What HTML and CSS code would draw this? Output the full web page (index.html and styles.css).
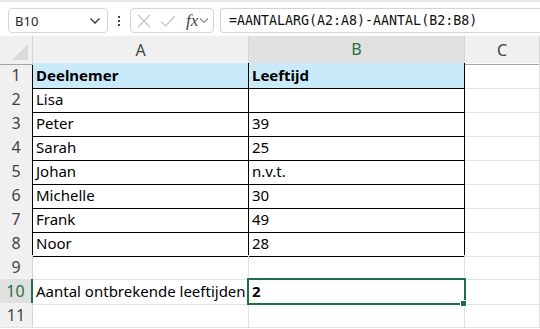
FILE: index.html
```html
<!DOCTYPE html>
<html lang="nl">
<head>
<meta charset="UTF-8">
<title>Werkblad</title>
<link rel="stylesheet" href="styles.css">
</head>
<body>
  <div class="toolbar">
    <div class="namebox">
      <span>B10</span>
      <svg class="chev" width="12" height="8" viewBox="0 0 12 8"><path d="M1.5 1.5 L6 6 L10.5 1.5" fill="none" stroke="#333" stroke-width="1.3"/></svg>
    </div>
    <div class="dots"><span></span><span></span><span></span></div>
    <div class="fxbox">
      <svg width="14" height="14" viewBox="0 0 14 14"><path d="M1 1 L13 13 M13 1 L1 13" stroke="#c4c4c4" stroke-width="1.2"/></svg>
      <svg width="16" height="14" viewBox="0 0 16 14"><path d="M1 7.5 L5.5 12 L15 2" fill="none" stroke="#c4c4c4" stroke-width="1.2"/></svg>
      <span class="fx">fx</span>
      <svg class="chev" width="10" height="7" viewBox="0 0 10 7"><path d="M1 1.5 L5 5.5 L9 1.5" fill="none" stroke="#888" stroke-width="1.1"/></svg>
    </div>
    <div class="formula">=AANTALARG(A2:A8)-AANTAL(B2:B8)</div>
  </div>

  <div class="sheet">
    <div class="row head">
      <div class="rh corner"><span class="tri"></span></div>
      <div class="ch">A</div>
      <div class="ch sel">B</div>
      <div class="ch">C</div>
    </div>
    <div class="row data first">
      <div class="rh">1</div>
      <div class="c a hdr">Deelnemer</div>
      <div class="c b hdr">Leeftijd</div>
      <div class="c"></div>
    </div>
    <div class="row data"><div class="rh">2</div><div class="c a">Lisa</div><div class="c b"></div><div class="c"></div></div>
    <div class="row data"><div class="rh">3</div><div class="c a">Peter</div><div class="c b">39</div><div class="c"></div></div>
    <div class="row data"><div class="rh">4</div><div class="c a">Sarah</div><div class="c b">25</div><div class="c"></div></div>
    <div class="row data"><div class="rh">5</div><div class="c a">Johan</div><div class="c b">n.v.t.</div><div class="c"></div></div>
    <div class="row data"><div class="rh">6</div><div class="c a">Michelle</div><div class="c b">30</div><div class="c"></div></div>
    <div class="row data"><div class="rh">7</div><div class="c a">Frank</div><div class="c b">49</div><div class="c"></div></div>
    <div class="row data"><div class="rh">8</div><div class="c a">Noor</div><div class="c b">28</div><div class="c"></div></div>
    <div class="row"><div class="rh">9</div><div class="c"></div><div class="c"></div><div class="c"></div></div>
    <div class="row">
      <div class="rh cur">10</div>
      <div class="c">Aantal ontbrekende leeftijden</div>
      <div class="c active"><b>2</b><span class="selbox"></span><span class="handle"></span></div>
      <div class="c"></div>
    </div>
    <div class="row"><div class="rh">11</div><div class="c"></div><div class="c"></div><div class="c"></div></div>
  </div>
</body>
</html>
```

FILE: styles.css
```css
body {
  margin: 0;
  width: 540px;
  height: 329px;
  overflow: hidden;
  background: #fff;
  font-family: "Noto Sans", "Liberation Sans", sans-serif;
  color: #000;
}
.toolbar {
  border-top: 2px solid #e6e6e6;
  display: flex;
  align-items: flex-start;
  padding-top: 6px;
  box-sizing: border-box;
  height: 36px;
  white-space: nowrap;
}
.namebox {
  margin-left: 8px;
  width: 100px;
  height: 25px;
  box-sizing: border-box;
  border: 1px solid #d4d4d4;
  border-radius: 4px;
  display: flex;
  align-items: center;
  justify-content: space-between;
  padding: 0 6px 0 6px;
  font-size: 13px;
  color: #222;
}
.dots {
  width: 22px;
  height: 25px;
  display: flex;
  flex-direction: column;
  align-items: center;
  justify-content: center;
  gap: 2px;
}
.dots span {
  width: 2px;
  height: 2px;
  background: #444;
}
.fxbox {
  width: 84px;
  height: 25px;
  box-sizing: border-box;
  border: 1px solid #d4d4d4;
  border-radius: 4px;
  display: flex;
  align-items: center;
  padding-left: 6px;
  gap: 9px;
}
.fx {
  font-family: "Liberation Serif", "DejaVu Serif", serif;
  font-style: italic;
  font-size: 17px;
  color: #444;
  margin-left: 1px;
}
.fxbox .chev {
  margin-left: -8px;
}
.formula {
  margin-left: 6px;
  flex: 1;
  height: 25px;
  box-sizing: border-box;
  border: 1px solid #d4d4d4;
  border-right: none;
  border-radius: 4px 0 0 4px;
  padding-left: 8px;
  font-family: "DejaVu Sans Mono", "Liberation Mono", monospace;
  font-size: 13.3px;
  line-height: 23px;
  color: #111;
}
.row {
  display: grid;
  grid-template-columns: 33px 216px 216px 1fr;
  height: 24px;
}
.row > div {
  box-sizing: border-box;
  border-right: 1px solid #e1e1e1;
  border-bottom: 1px solid #e1e1e1;
}
.row.head {
  height: 27px;
  background: #f0f0f0;
}
.row.head > div {
  border-right: 1px solid #d4d4d4;
  border-bottom: 1px solid #a6a6a6;
}
.corner {
  position: relative;
}
.tri {
  position: absolute;
  right: 4px;
  bottom: 4px;
  width: 0;
  height: 0;
  border-left: 16px solid transparent;
  border-bottom: 16px solid #dadada;
}
.ch {
  text-align: center;
  font-size: 16px;
  line-height: 28px;
  color: #444;
}
.row.head .ch.sel {
  background: #e0e0e0;
  color: #1e7145;
  border-bottom: 2px solid #1e7145;
  line-height: 27px;
}
.rh {
  background: #f0f0f0;
  text-align: center;
  font-size: 16px;
  line-height: 24px;
  color: #444;
}
.row > .rh {
  border-right: 1px solid #d4d4d4;
  border-bottom: 1px solid #e1e1e1;
}
.row.data > .rh {
  border-right-color: #000;
}
.rh.cur {
  background: #e0e0e0;
  color: #1e7145;
}
.row > .rh.cur {
  border-right: 2px solid #1e7145;
}
.c {
  font-size: 15px;
  line-height: 25px;
  padding-left: 3px;
  white-space: nowrap;
}
.row > .c.a,
.row > .c.b {
  border-right-color: #000;
  border-bottom-color: #000;
}
.c.hdr {
  background: #c9ebf9;
  font-weight: bold;
}
.active {
  position: relative;
}
.selbox {
  position: absolute;
  left: -2px;
  top: -1px;
  right: -2px;
  bottom: -1px;
  border: 2px solid #1e7145;
}
.handle {
  position: absolute;
  right: -3px;
  bottom: -3px;
  width: 5px;
  height: 5px;
  background: #1e7145;
  border: 1px solid #fff;
}
```
